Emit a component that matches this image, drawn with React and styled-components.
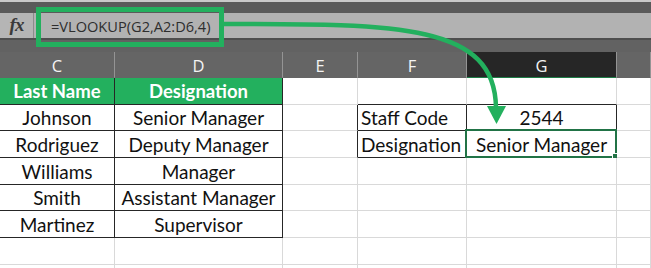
import React from "react";
import styled, { createGlobalStyle } from "styled-components";

const Global = createGlobalStyle`
  html, body { margin: 0; padding: 0; background: #ffffff; }
  body { font-family: "Lato", "Open Sans", sans-serif; }
`;

const COLS = "115px 168px 75px 109px 150px 34px";
const ACCENT = "#23b05e";
const INK = "#262626";
const GRID = "#d9d9d9";

const Window = styled.div`
  position: relative;
  width: 651px;
  height: 268px;
  overflow: hidden;
  display: flex;
  flex-direction: column;
  background: #ffffff;
`;

const TopEdge = styled.div`
  height: 2px;
  background: #c9c9c9;
  flex: none;
`;

const RibbonShade = styled.div`
  height: 11px;
  background: #5a5a5a;
  flex: none;
`;

const FormulaBar = styled.div`
  height: 25px;
  flex: none;
  display: flex;
  background: #b2b2b2;
  border-bottom: 2px solid #4e4e4e;
`;

const FxButton = styled.div`
  width: 33px;
  flex: none;
  display: flex;
  align-items: center;
  justify-content: center;
  background: #b5b5b5;
  border-right: 1px solid #8c8c8c;
  font-family: "Liberation Serif", "DejaVu Serif", serif;
  font-style: italic;
  font-weight: 700;
  font-size: 19px;
  color: #3a3a3a;
  letter-spacing: -1px;
  padding-bottom: 1px;
`;

const FormulaInput = styled.div`
  flex: 1;
  display: flex;
  align-items: center;
  padding-left: 17px;
  font-family: "Open Sans", "Noto Sans", sans-serif;
  font-size: 14.6px;
  color: #2e2e2e;
`;

const HeaderGap = styled.div`
  height: 12px;
  flex: none;
  background: #626262;
`;

const ColumnHeaders = styled.div`
  display: grid;
  grid-template-columns: ${COLS};
  height: 26px;
  flex: none;
  background: #656565;
`;

const ColumnHead = styled.div`
  display: flex;
  align-items: center;
  justify-content: center;
  box-sizing: border-box;
  border-right: 1px solid #949494;
  background: ${(p) => (p.$active ? "#262626" : "#656565")};
  border-bottom: 2px solid ${(p) => (p.$active ? "#1e7d47" : "#656565")};
  font-family: "Open Sans", "Noto Sans", sans-serif;
  font-size: 16.5px;
  color: #f4f4f4;
  padding-top: 2px;
`;

const Sheet = styled.div`
  display: grid;
  grid-template-columns: ${COLS};
  grid-auto-rows: 26.67px;
  flex: none;
`;

const Cell = styled.div`
  position: relative;
  box-sizing: border-box;
  display: flex;
  align-items: center;
  justify-content: ${(p) => (p.$align === "left" ? "flex-start" : "center")};
  padding-left: ${(p) => (p.$align === "left" ? "3px" : "0")};
  border-right: 1px solid ${(p) => (p.$right ? INK : GRID)};
  border-bottom: 1px solid ${(p) => (p.$bottom ? INK : GRID)};
  background: ${(p) => (p.$head ? ACCENT : "#ffffff")};
  color: ${(p) => (p.$head ? "#ffffff" : "#111111")};
  font-weight: ${(p) => (p.$head ? 700 : 400)};
  font-size: ${(p) => (p.$head ? "18.5px" : "19px")};
  white-space: nowrap;
  padding-top: 1px;
`;

const Selection = styled.div`
  position: absolute;
  left: -2px;
  top: -2px;
  right: -1px;
  bottom: -1px;
  border: 2px solid #217346;
  pointer-events: none;

  &::after {
    content: "";
    position: absolute;
    right: -4px;
    bottom: -4px;
    width: 5px;
    height: 5px;
    background: #217346;
    border: 1px solid #ffffff;
  }
`;

const FormulaFrame = styled.div`
  position: absolute;
  left: 36px;
  top: 7px;
  width: 188px;
  height: 40px;
  box-sizing: border-box;
  border: 5px solid ${ACCENT};
  pointer-events: none;
`;

const Pointer = styled.svg`
  position: absolute;
  left: 0;
  top: 0;
  pointer-events: none;
`;

const headers = ["C", "D", "E", "F", "G", ""];

// each row: [text, options] for columns C..H
const rows = [
  [
    ["Last Name", { head: true, right: true, bottom: true }],
    ["Designation", { head: true, right: true, bottom: true }],
    ["", {}],
    ["", { bottom: true }],
    ["", { bottom: true }],
    ["", {}],
  ],
  [
    ["Johnson", { right: true, bottom: true }],
    ["Senior Manager", { right: true, bottom: true }],
    ["", { right: true }],
    ["Staff Code", { right: true, bottom: true, align: "left" }],
    ["2544", { right: true, bottom: true }],
    ["", {}],
  ],
  [
    ["Rodriguez", { right: true, bottom: true }],
    ["Deputy Manager", { right: true, bottom: true }],
    ["", { right: true }],
    ["Designation", { right: true, bottom: true, align: "left" }],
    ["Senior Manager", { right: true, bottom: true, selected: true }],
    ["", {}],
  ],
  [
    ["Williams", { right: true, bottom: true }],
    ["Manager", { right: true, bottom: true }],
    ["", {}],
    ["", {}],
    ["", {}],
    ["", {}],
  ],
  [
    ["Smith", { right: true, bottom: true }],
    ["Assistant Manager", { right: true, bottom: true }],
    ["", {}],
    ["", {}],
    ["", {}],
    ["", {}],
  ],
  [
    ["Martinez", { right: true, bottom: true }],
    ["Supervisor", { right: true, bottom: true }],
    ["", {}],
    ["", {}],
    ["", {}],
    ["", {}],
  ],
  [["", {}], ["", {}], ["", {}], ["", {}], ["", {}], ["", {}]],
  [["", {}], ["", {}], ["", {}], ["", {}], ["", {}], ["", {}]],
];

export default function App() {
  return (
    <>
      <Global />
      <Window>
        <TopEdge />
        <RibbonShade />
        <FormulaBar>
          <FxButton>fx</FxButton>
          <FormulaInput>=VLOOKUP(G2,A2:D6,4)</FormulaInput>
        </FormulaBar>
        <HeaderGap />
        <ColumnHeaders>
          {headers.map((h, i) => (
            <ColumnHead key={i} $active={h === "G"}>
              {h}
            </ColumnHead>
          ))}
        </ColumnHeaders>
        <Sheet>
          {rows.map((row, r) =>
            row.map(([text, o], c) => (
              <Cell
                key={`${r}-${c}`}
                $head={o.head}
                $right={o.right}
                $bottom={o.bottom}
                $align={o.align}
              >
                {text}
                {o.selected && <Selection />}
              </Cell>
            ))
          )}
        </Sheet>

        <FormulaFrame />
        <Pointer width="651" height="268" viewBox="0 0 651 268">
          <path
            d="M224 24 C 400 24, 495 24, 496 108"
            fill="none"
            stroke={ACCENT}
            strokeWidth="4.5"
          />
          <polygon points="487,106 506,106 496.5,124" fill={ACCENT} />
        </Pointer>
      </Window>
    </>
  );
}
